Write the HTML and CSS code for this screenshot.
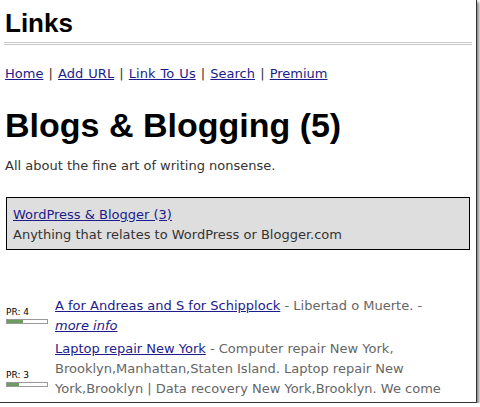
FILE: index.html
```html
<!DOCTYPE html>
<html lang="en">
<head>
    <meta charset="UTF-8">
    <title>Links - Blogs &amp; Blogging</title>
    <link rel="stylesheet" href="styles.css">
</head>
<body>
    <div class="page">
        <h1 class="site-title">Links</h1>
        <hr class="rule">

        <div class="nav">
            <a href="#">Home</a> | <a href="#">Add URL</a> | <a href="#">Link To Us</a> | <a href="#">Search</a> | <a href="#">Premium</a>
        </div>

        <h1 class="cat-title">Blogs &amp; Blogging (5)</h1>
        <p class="cat-desc">All about the fine art of writing nonsense.</p>

        <div class="subcats">
            <a href="#">WordPress &amp; Blogger (3)</a><br>
            Anything that relates to WordPress or Blogger.com
        </div>

        <ul class="links">
            <li>
                <div class="pr">
                    <small>PR: 4</small>
                    <div class="pr-bar"><div class="pr-fill" style="width: 40%"></div></div>
                </div>
                <div class="entry">
                    <a href="#">A for Andreas and S for Schipplock</a> - Libertad o Muerte. - <a class="more" href="#">more info</a>
                </div>
            </li>
            <li>
                <div class="pr">
                    <small>PR: 3</small>
                    <div class="pr-bar"><div class="pr-fill" style="width: 30%"></div></div>
                </div>
                <div class="entry">
                    <a href="#">Laptop repair New York</a> - Computer repair New York, Brooklyn,Manhattan,Staten Island. Laptop repair New York,Brooklyn | Data recovery New York,Brooklyn. We come to your home or office, same day service. - <a class="more" href="#">more info</a>
                </div>
            </li>
        </ul>
    </div>
</body>
</html>
```

FILE: styles.css
```css
* {
    box-sizing: border-box;
}

body {
    margin: 0;
    background-color: #fff;
    font-family: "DejaVu Sans", Verdana, sans-serif;
    font-size: 13px;
    color: #333;
}

.page {
    width: 477px;
    height: 403px;
    padding: 0 4px 0 4px;
    border-right: 1px solid #333;
    border-bottom: 1px solid #333;
    box-shadow: 2px 2px 3px rgba(0, 0, 0, 0.5);
    overflow: hidden;
}

a {
    color: #1c1c8a;
}

.site-title {
    font-family: "Liberation Sans", Arial, sans-serif;
    font-size: 26px;
    line-height: 32px;
    margin: 7px 0 0 1px;
    color: #000;
}

.rule {
    margin: 3px 0 0;
    height: 3px;
    border: 0;
    border-top: 1px solid #c8c8c8;
    border-bottom: 1px solid #c8c8c8;
}

.nav {
    margin: 21px 0 0 1px;
    line-height: 16px;
    word-spacing: 1px;
}

.cat-title {
    font-family: "Liberation Sans", Arial, sans-serif;
    font-size: 34px;
    line-height: 40px;
    margin: 23px 0 0 1px;
    color: #000;
}

.cat-desc {
    margin: 13px 0 0 1px;
    line-height: 16px;
}

.subcats {
    margin: 23px 2px 0 2px;
    padding: 7px 6px 4px;
    background-color: #dedede;
    border: 1px solid #000;
    line-height: 20px;
}

.links {
    list-style-type: none;
    margin: 46px 0 0;
    padding: 0 20px 0 0;
}

.links li {
    display: flex;
    align-items: center;
    margin-bottom: 3px;
}

.pr {
    width: 51px;
    flex-shrink: 0;
    padding-left: 2px;
    padding-bottom: 2px;
}

.pr small {
    display: block;
    font-size: 9px;
    line-height: 10px;
    color: #000;
}

.pr-bar {
    margin-top: 2px;
    width: 42px;
    height: 5px;
    border: 1px solid #999;
    background-color: #fff;
}

.pr-fill {
    height: 100%;
    background-color: #6b9c60;
}

.entry {
    line-height: 20px;
    color: #666;
}

.more {
    font-style: italic;
    white-space: nowrap;
}
```
